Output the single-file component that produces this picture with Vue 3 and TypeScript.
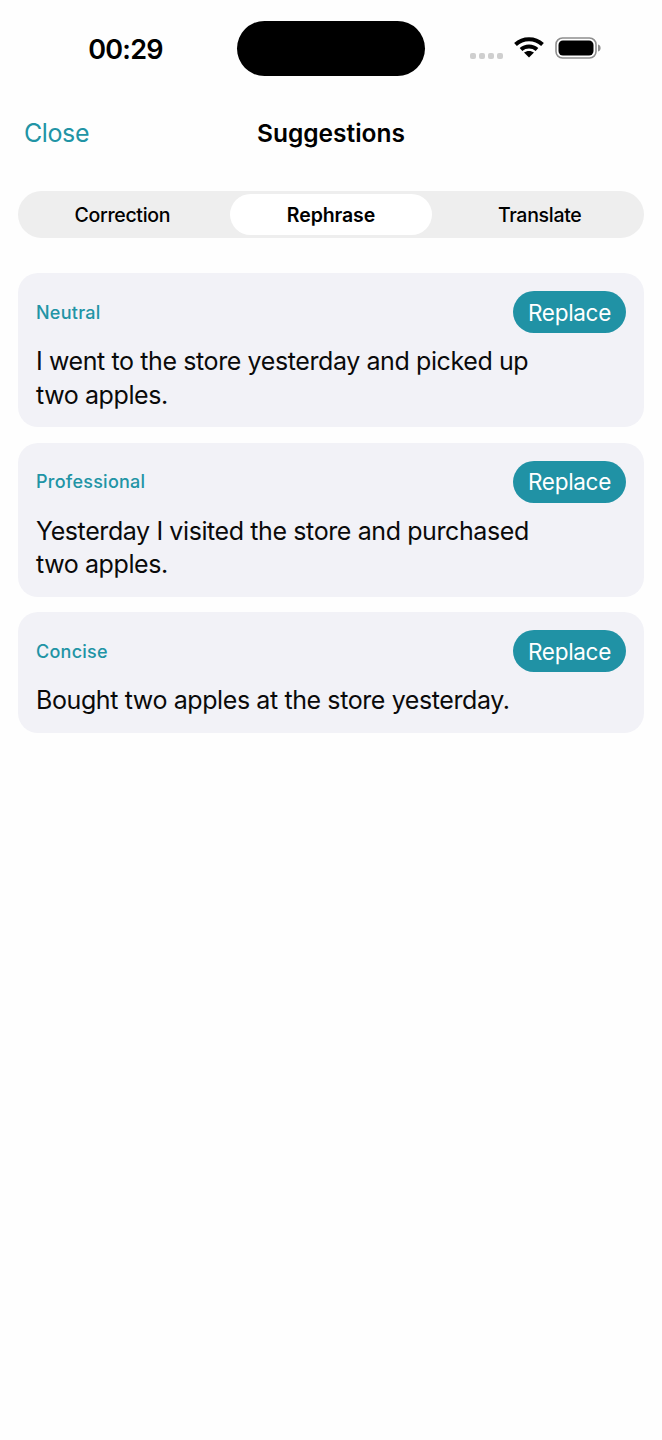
<template>
    <div class="screen">
        <div class="status-bar">
            <div class="time">00:29</div>
            <div class="island"></div>
            <div class="status-icons">
                <div class="signal">
                    <span v-for="n in 4" :key="n" class="dot"></span>
                </div>
                <svg class="wifi" width="30" height="22" viewBox="0 0 30 22">
                    <path d="M1.5 8.5C9 1.5 21 1.5 28.5 8.5" fill="none" stroke="#000" stroke-width="4" />
                    <path d="M7 13.5C11.5 9.5 18.5 9.5 23 13.5" fill="none" stroke="#000" stroke-width="4" />
                    <path d="M15 21.5L10 16.6C12.8 14.4 17.2 14.4 20 16.6Z" fill="#000" />
                </svg>
                <svg class="battery" width="46" height="22" viewBox="0 0 46 22">
                    <rect x="1" y="1" width="40" height="20" rx="6.5" fill="none" stroke="#8e8e8e" stroke-width="1.6" />
                    <rect x="3.5" y="3.5" width="35" height="15" rx="4.5" fill="#000" />
                    <path d="M43 7.5C44.8 8 45.6 9.4 45.6 11C45.6 12.6 44.8 14 43 14.5Z" fill="#8e8e8e" />
                </svg>
            </div>
        </div>

        <div class="nav">
            <span class="close">Close</span>
            <span class="title">Suggestions</span>
            <span></span>
        </div>

        <div class="tabs">
            <div v-for="tab in tabs" :key="tab" class="tab" :class="{ active: tab === current }">{{ tab }}</div>
        </div>

        <div class="list">
            <div v-for="item in suggestions" :key="item.label" class="card">
                <div class="card-head">
                    <span class="label">{{ item.label }}</span>
                    <button class="replace">Replace</button>
                </div>
                <p class="text">{{ item.text }}</p>
            </div>
        </div>
    </div>
</template>

<script setup lang="ts">
const tabs: string[] = ['Correction', 'Rephrase', 'Translate']
const current = 'Rephrase'

const suggestions = [
    { label: 'Neutral', text: 'I went to the store yesterday and picked up two apples.' },
    { label: 'Professional', text: 'Yesterday I visited the store and purchased two apples.' },
    { label: 'Concise', text: 'Bought two apples at the store yesterday.' },
]
</script>

<style scoped>
.screen {
    width: 662px;
    height: 1440px;
    background: #fefefe;
    font-family: Inter, "Liberation Sans", sans-serif;
    color: #000;
    overflow: hidden;
}

.status-bar {
    display: grid;
    grid-template-columns: 237px 188px 1fr;
    padding-top: 21px;
    height: 55px;
}
.time {
    font-size: 27px;
    font-weight: 600;
    letter-spacing: -0.8px;
    text-align: center;
    padding-left: 14px;
    line-height: 57px;
    height: 55px;
}
.island {
    height: 55px;
    background: #000;
    border-radius: 28px;
}
.status-icons {
    display: flex;
    align-items: center;
    padding: 0 0 0 45px;
    height: 55px;
    margin-top: -1px;
}
.signal {
    display: flex;
    gap: 3px;
    margin-top: 16px;
    margin-right: 11px;
}
.dot {
    width: 6px;
    height: 6px;
    border-radius: 2px;
    background: #cfcfcf;
}
.wifi {
    margin-top: -2px;
    margin-right: 11px;
}

.nav {
    display: grid;
    grid-template-columns: 1fr auto 1fr;
    align-items: center;
    margin-top: 24px;
    padding: 0 24px;
    height: 66px;
}
.close {
    font-size: 25px;
    letter-spacing: -0.4px;
    color: #2194a5;
}
.title {
    font-size: 24.5px;
    font-weight: 600;
}

.tabs {
    display: grid;
    grid-template-columns: repeat(3, 1fr);
    margin: 25px 18px 0;
    height: 47px;
    background: #eeeeee;
    border-radius: 24px;
}
.tab {
    display: flex;
    align-items: center;
    justify-content: center;
    font-size: 19.5px;
    font-weight: 500;
    letter-spacing: -0.3px;
    border-radius: 21px;
}
.tab.active {
    margin: 3px;
    background: #fff;
    font-weight: 600;
    letter-spacing: -0.1px;
}

.list {
    display: flex;
    flex-direction: column;
    gap: 15.5px;
    margin: 35px 18px 0;
}
.card {
    background: #f2f2f7;
    border-radius: 20px;
    padding: 18px 18px 15px;
}
.card-head {
    display: flex;
    align-items: center;
    justify-content: space-between;
    height: 42px;
}
.label {
    font-size: 18px;
    font-weight: 500;
    letter-spacing: 0.25px;
    color: #2194a5;
}
.replace {
    width: 113px;
    height: 42px;
    padding: 0;
    border: 0;
    border-radius: 21px;
    background: #2092a5;
    color: #fff;
    font-family: inherit;
    font-size: 22.5px;
    letter-spacing: -0.3px;
}
.text {
    margin: 12px 0 0;
    width: 510px;
    font-size: 25px;
    line-height: 33.5px;
    letter-spacing: -0.4px;
    color: #0a0a0a;
}
</style>
